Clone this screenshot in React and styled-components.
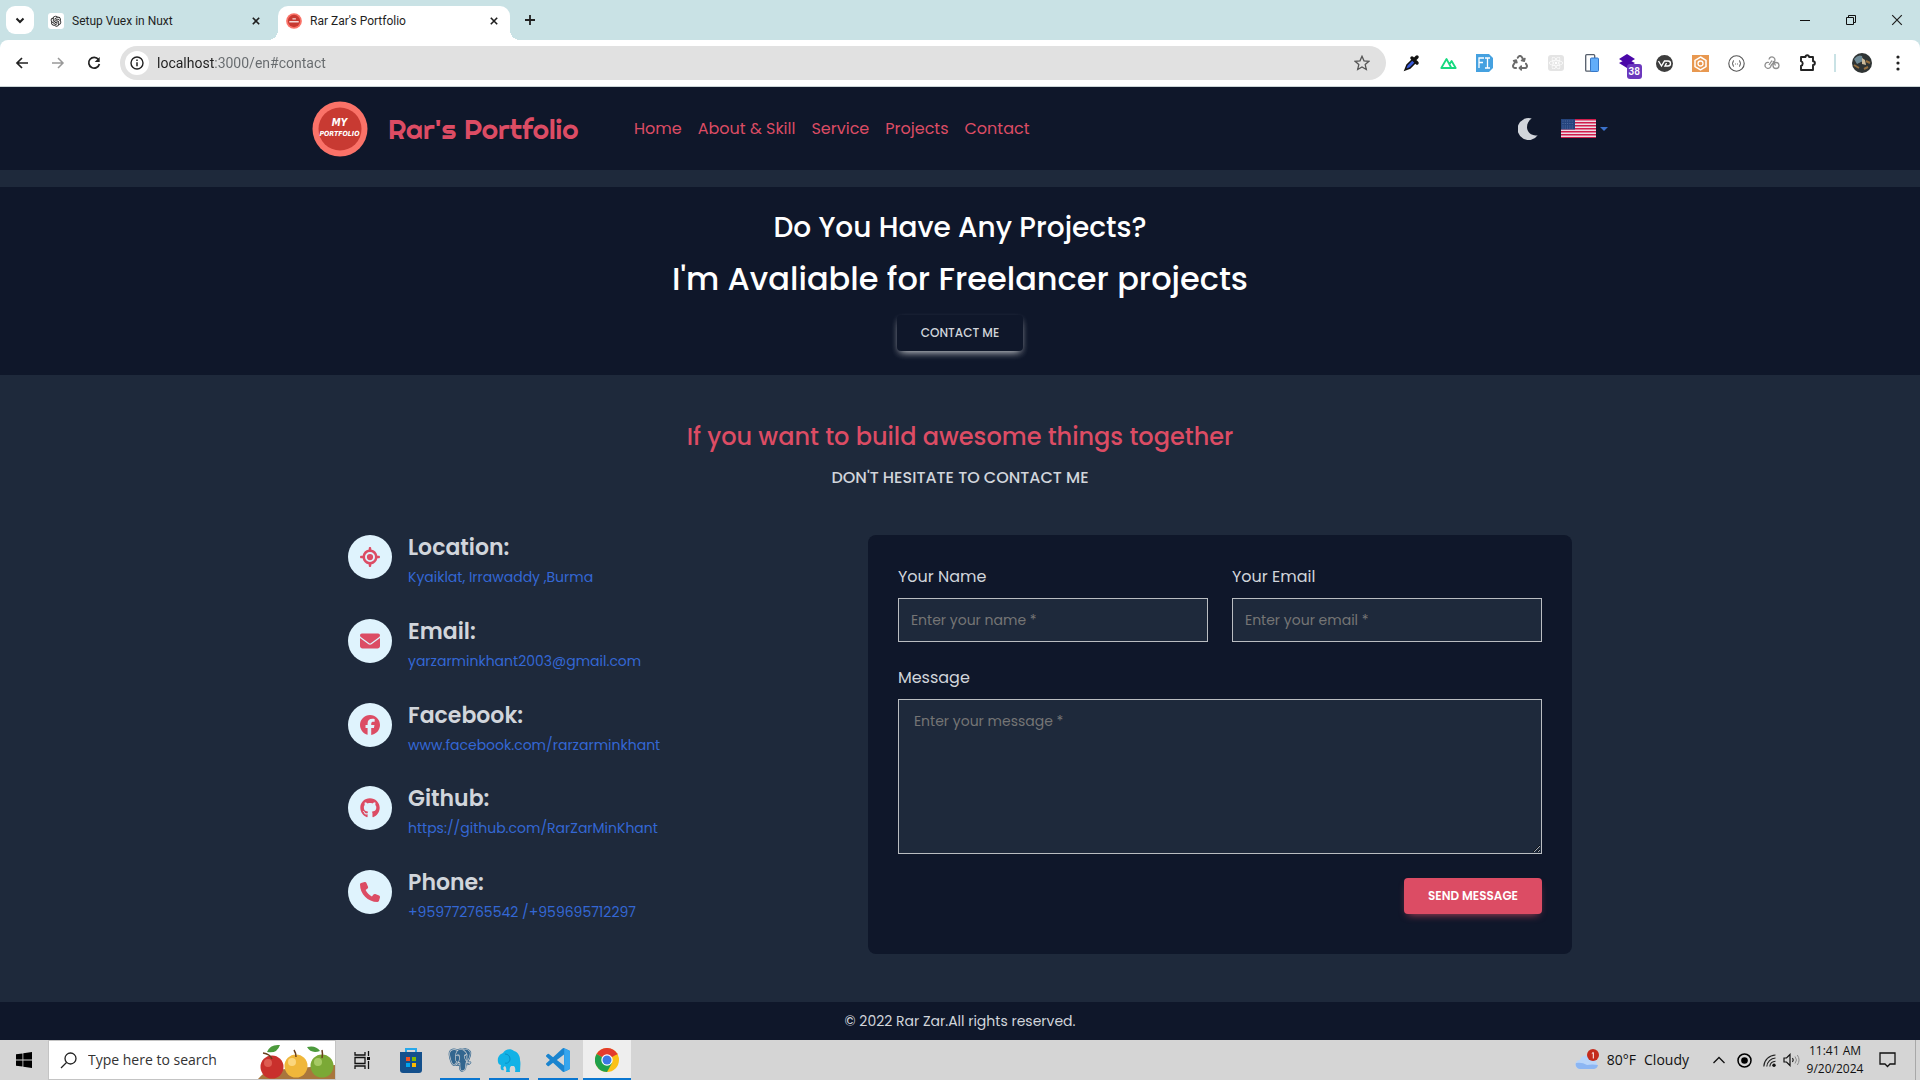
import React from "react";
import styled, { createGlobalStyle, css } from "styled-components";
import {
  FaLocationCrosshairs,
  FaEnvelope,
  FaFacebook,
  FaGithub,
  FaPhone,
  FaRecycle,
  FaReact,
} from "react-icons/fa6";
import { AiOutlineOpenAI } from "react-icons/ai";
import { BiLogoPostgresql } from "react-icons/bi";

const c = {
  navy: "#0f172a",
  slate: "#1e293b",
  pink: "#dc4c64",
  text: "#d1d5db",
  link: "#3467d4",
  strip: "#c9e2e5",
  task: "#d5d5d5",
};

const body = `Poppins, Inter, "Open Sans", sans-serif`;
const display = `Righteous, Poppins, Inter, sans-serif`;
const system = `"Segoe UI", "Open Sans", "Noto Sans", sans-serif`;
const browser = `Roboto, "Open Sans", sans-serif`;

const Global = createGlobalStyle`
  *, *::before, *::after { box-sizing: border-box; }
  body { margin: 0; background: ${c.slate}; font-family: ${body}; color: ${c.text}; }
  h1, h2, h3, p { margin: 0; }
  button, input, textarea { font: inherit; }
  button { border: 0; background: none; padding: 0; color: inherit; cursor: pointer; }
  a { text-decoration: none; }
  svg { display: block; flex: none; }
`;

const Screen = styled.div`
  display: flex;
  flex-direction: column;
  min-height: 100vh;
`;

/* ---------- browser window ---------- */

const BrowserChrome = styled.header`
  background: ${c.strip};
  font-family: ${browser};
  color: #1f1f1f;
`;

const TabStrip = styled.div`
  display: flex;
  align-items: flex-end;
  height: 40px;
  padding-left: 6px;
`;

const TabSearch = styled.button`
  display: grid;
  place-items: center;
  width: 28px;
  height: 28px;
  margin: 0 6px 6px 0;
  border-radius: 9px;
  background: #fff;
`;

const Tab = styled.div`
  display: flex;
  align-items: center;
  gap: 8px;
  width: ${(p) => (p.$active ? 232 : 238)}px;
  height: 34px;
  padding: 0 ${(p) => (p.$active ? 8 : 14)}px 5px 8px;
  font-size: 12px;
  line-height: 16px;
  ${(p) =>
    p.$active &&
    css`
      position: relative;
      background: #fff;
      border-radius: 10px 10px 0 0;
      &::before,
      &::after {
        content: "";
        position: absolute;
        bottom: 0;
        width: 10px;
        height: 10px;
      }
      &::before {
        left: -10px;
        background: radial-gradient(circle at 0 0, transparent 10px, #fff 10px);
      }
      &::after {
        right: -10px;
        background: radial-gradient(circle at 100% 0, transparent 10px, #fff 10px);
      }
    `}
`;

const TabTitle = styled.span`
  flex: 1;
  white-space: nowrap;
`;

const Favicon = styled.span`
  display: grid;
  place-items: center;
  width: 16px;
  height: 16px;
  border-radius: 3px;
  background: ${(p) => p.$fill || "none"};
`;

const GlyphButton = styled.button`
  display: grid;
  place-items: center;
  width: ${(p) => p.$w || 16}px;
  height: ${(p) => p.$h || 16}px;
  color: ${(p) => p.$color || "inherit"};
  flex: none;
`;

const WindowControls = styled.div`
  display: flex;
  margin-left: auto;
  align-self: flex-start;
`;

const Toolbar = styled.div`
  display: flex;
  align-items: center;
  height: 47px;
  padding: 0 4px;
  background: #fff;
  border-bottom: 1px solid #cbd5d6;
  border-radius: 8px 8px 0 0;
`;

const AddressBar = styled.div`
  display: flex;
  align-items: center;
  gap: 8px;
  flex: 1;
  height: 34px;
  margin: 0 8px;
  padding: 0 16px 0 5px;
  border-radius: 17px;
  background: #e1e1e1;
`;

const SiteInfo = styled.button`
  display: grid;
  place-items: center;
  width: 24px;
  height: 24px;
  border-radius: 50%;
  background: #fff;
`;

const AddressInput = styled.input`
  flex: 1;
  min-width: 0;
  padding: 0;
  border: 0;
  outline: 0;
  font-size: 14px;
  line-height: 20px;
  color: #5f6368;
  background: linear-gradient(90deg, #1f1f1f 57px, #666a6d 57px);
  -webkit-background-clip: text;
  background-clip: text;
  -webkit-text-fill-color: transparent;
`;

const Extensions = styled.div`
  display: flex;
  align-items: center;
`;

const ExtensionBadge = styled.span`
  position: absolute;
  right: 4px;
  bottom: 0;
  padding: 0 2px;
  border-radius: 3px;
  background: #6b38bd;
  color: #fff;
  font-size: 10px;
  font-weight: 600;
  line-height: 15px;
`;

const ExtensionButton = styled.button`
  position: relative;
  display: grid;
  place-items: center;
  width: 36px;
  height: 32px;
`;

const Divider = styled.span`
  width: 2px;
  height: 18px;
  margin: 0 8px;
  background: ${c.strip};
`;

/* ---------- portfolio page ---------- */

const Page = styled.div`
  display: flex;
  flex-direction: column;
  flex: 1;
`;

const NavBar = styled.nav`
  background: ${c.navy};
  margin-bottom: 17px;
`;

const NavInner = styled.div`
  display: flex;
  align-items: center;
  max-width: 1320px;
  height: 83px;
  margin: 0 auto;
  padding: 0 12px;
`;

const Brand = styled.a`
  display: flex;
  align-items: center;
  gap: 20px;
  width: 322px;
  color: ${c.pink};
  font-family: ${display};
  font-size: 28px;
  font-weight: 400;
  line-height: 32px;
  white-space: nowrap;
`;

const NavLinks = styled.div`
  display: flex;
  gap: 16px;
  flex: 1;
`;

const NavLink = styled.a`
  color: ${c.pink};
  font-size: 16px;
  line-height: 24px;
`;

const NavTools = styled.div`
  display: flex;
  align-items: center;
  gap: 23px;
`;

const LanguageButton = styled.button`
  display: flex;
  align-items: center;
  gap: 4px;
`;

const Hero = styled.section`
  display: flex;
  flex-direction: column;
  align-items: center;
  padding: 21px 12px 24px;
  background: ${c.navy};
  color: #fff;
  text-align: center;
`;

const HeroLead = styled.h2`
  font-size: 28px;
  font-weight: 500;
  line-height: 40px;
  margin-bottom: 11px;
`;

const HeroTitle = styled.h1`
  font-size: 32px;
  font-weight: 500;
  line-height: 40px;
  margin-bottom: 16px;
`;

const Button = styled.button`
  height: 36px;
  padding: 0 24px;
  border-radius: 4px;
  font-size: 12px;
  line-height: 18px;
  font-weight: ${(p) => (p.$primary ? 600 : 500)};
  text-transform: uppercase;
  color: ${(p) => (p.$primary ? "#fff" : c.text)};
  background: ${(p) => (p.$primary ? c.pink : c.navy)};
  box-shadow: ${(p) =>
    p.$primary
      ? "0 4px 9px -4px rgba(220, 76, 100, 0.9)"
      : "0 4px 9px -4px rgba(255, 255, 255, 0.9), 0 3px 6px rgba(255, 255, 255, 0.16)"};
`;

const ContactSection = styled.section`
  flex: 1;
  width: 100%;
  max-width: 1320px;
  margin: 0 auto;
  padding: 44px 48px 48px;
`;

const SectionTitle = styled.h2`
  color: ${c.pink};
  font-size: 24px;
  font-weight: 500;
  line-height: 36px;
  text-align: center;
`;

const SectionNote = styled.p`
  margin: 10px 0 45px;
  font-size: 16px;
  font-weight: 500;
  line-height: 25px;
  text-align: center;
  text-transform: uppercase;
`;

const ContactGrid = styled.div`
  display: grid;
  grid-template-columns: 5fr 7fr;
  column-gap: 17px;
`;

const ContactList = styled.div`
  display: flex;
  flex-direction: column;
  justify-content: space-between;
  padding-bottom: 24px;
`;

const ContactItem = styled.div`
  display: flex;
  gap: 16px;
  height: 60px;
`;

const ContactIcon = styled.span`
  display: grid;
  place-items: center;
  width: 44px;
  height: 44px;
  border-radius: 50%;
  background: #dff3fd;
  color: ${c.pink};
  flex: none;
`;

const ContactLabel = styled.h3`
  font-size: 22px;
  font-weight: 600;
  line-height: 26px;
  margin-bottom: 6px;
`;

const ContactLink = styled.a`
  display: block;
  color: ${c.link};
  font-size: 14px;
  line-height: 21px;
`;

const FormCard = styled.form`
  display: grid;
  grid-template-columns: 1fr 1fr;
  gap: 24px;
  padding: 30px 30px 40px;
  border-radius: 8px;
  background: ${c.navy};
`;

const Field = styled.div`
  display: flex;
  flex-direction: column;
  gap: 9px;
  grid-column: ${(p) => (p.$wide ? "1 / -1" : "auto")};
`;

const FieldLabel = styled.label`
  font-size: 16px;
  line-height: 24px;
`;

const control = css`
  width: 100%;
  border: 1px solid #babdc1;
  border-radius: 0;
  outline: 0;
  background: ${c.slate};
  color: ${c.text};
  font-size: 14px;
  line-height: 21px;
  &::placeholder {
    color: #757575;
    opacity: 1;
  }
`;

const TextInput = styled.input`
  ${control}
  height: 44px;
  padding: 0 12px;
`;

const TextArea = styled.textarea`
  ${control}
  display: block;
  height: 155px;
  padding: 11px 15px;
  resize: both;
`;

const FormActions = styled.div`
  grid-column: 1 / -1;
  display: flex;
  justify-content: flex-end;
`;

const Footer = styled.footer`
  padding: 7px 12px;
  background: ${c.navy};
  font-size: 14px;
  line-height: 24px;
  text-align: center;
`;

/* ---------- taskbar ---------- */

const Taskbar = styled.div`
  display: flex;
  align-items: stretch;
  height: 40px;
  background: ${c.task};
  color: #111;
  font-family: ${system};
`;

const StartButton = styled.button`
  display: grid;
  place-items: center;
  width: 48px;
`;

const SearchBox = styled.label`
  display: flex;
  align-items: center;
  width: 288px;
  margin-right: 2px;
  padding-left: 11px;
  border: 1px solid #c4c4c4;
  background: #fff;
`;

const SearchInput = styled.input`
  flex: 1;
  min-width: 0;
  margin-left: 11px;
  padding: 0;
  border: 0;
  outline: 0;
  background: none;
  font-size: 14px;
  line-height: 20px;
  &::placeholder {
    color: #333;
    opacity: 1;
  }
`;

const TaskButton = styled.button`
  display: grid;
  place-items: center;
  width: 48px;
  margin-right: 1px;
  background: ${(p) => (p.$active ? "#eeeeee" : "none")};
  box-shadow: ${(p) => (p.$active ? "inset 0 -2px #0a76d0" : "none")};
  ${(p) =>
    p.$running &&
    css`
      background: linear-gradient(#0a76d0, #0a76d0) center bottom / 40px 2px no-repeat;
    `}
`;

const Tray = styled.div`
  display: flex;
  align-items: center;
  margin-left: auto;
  padding-right: 4px;
`;

const Weather = styled.button`
  display: flex;
  align-items: center;
  gap: 8px;
  margin-right: 18px;
  font-size: 14px;
  line-height: 20px;
`;

const Clock = styled.time`
  width: 64px;
  margin-left: 2px;
  font-size: 12px;
  line-height: 18px;
  text-align: center;
  white-space: nowrap;
`;

const ShowDesktop = styled.button`
  align-self: stretch;
  width: 1px;
  margin-left: 8px;
  background: #a8a8a8;
`;

/* ---------- drawings ---------- */

const Svg = ({ w = 16, h = w, box = `0 0 ${w} ${h}`, children, ...rest }) => (
  <svg width={w} height={h} viewBox={box} fill="none" aria-hidden="true" {...rest}>
    {children}
  </svg>
);

const Cross = ({ size = 8, stroke = 2 }) => (
  <Svg w={size} box="0 0 10 10">
    <path d="M1 1l8 8M9 1L1 9" stroke="currentColor" strokeWidth={stroke} />
  </Svg>
);

const LogoText = styled.text`
  font-family: "DejaVu Sans Condensed", "DejaVu Sans", sans-serif;
  font-weight: 700;
  font-style: oblique;
  fill: #fff;
  text-anchor: middle;
`;

const Logo = ({ size }) => (
  <Svg w={size} box="-0.5 -0.5 56 56">
    <circle cx="27.500" cy="27.500" r="27.500" fill="#fa7268" />
    <circle cx="27.500" cy="27.500" r="21.500" fill="#c83a32" />
    {size > 20 ? (
      <>
        <LogoText x="27" y="24" fontSize="10">MY</LogoText>
        <LogoText x="27" y="34" fontSize="7">PORTFOLIO</LogoText>
      </>
    ) : (
      <path d="M22 20h12M11 30h33" stroke="#fff" strokeWidth="5" opacity=".8" />
    )}
  </Svg>
);

const Moon = () => (
  <Svg w={20} h={22}>
    <path d="M13.700.5A11 11 0 1 0 19.700 17.200C15 18.500 9 15 9 9.300C9 5.500 10.800 2.300 13.700.5z" fill={c.text} />
  </Svg>
);

const Flag = () => (
  <Svg w={35} h={19}>
    <rect width="35" height="19" fill="#ecdbe3" />
    {[0, 3, 6, 9, 12, 15, 18].map((y) => (
      <rect key={y} y={y} width="35" height="1.500" fill="#d01c4b" />
    ))}
    <rect width="14" height="10.500" fill="#25447d" />
    {[2, 4.5, 7, 9].map((y) => (
      <path key={y} d={`M1.500 ${y}h11.500`} stroke="#5f7bad" strokeWidth=".8" strokeDasharray="1 1.300" />
    ))}
  </Svg>
);

const Puzzle = () => (
  <Svg w={20}>
    <path
      d="M3 4h4.500a1.800 1.800 0 0 1 3.600 0H15v4.200a1.900 1.900 0 0 1 0 3.800v5H3v-4.200a2.400 2.400 0 0 0 0-4.600z"
      stroke="#222" strokeWidth="1.900" strokeLinejoin="round"
    />
  </Svg>
);

const extensions = [
  ["Color picker", (
    <Svg w={18}>
      <path d="M2 16l2-5 6-6 3 3-6 6-5 2z" fill="#3658d8" stroke="#111" strokeWidth="1.500" />
      <path d="M9 4l5 5M11 6l3-3" stroke="#111" strokeWidth="3.500" strokeLinecap="round" />
    </Svg>
  )],
  ["Nuxt", (
    <Svg w={17} h={14}>
      <path d="M6 12H1.300L6.500 3l4.900 9H6zM11.500 12h4.200L11.600 5 9.500 8.300" stroke="#17d97f" strokeWidth="1.800" strokeLinejoin="round" />
    </Svg>
  )],
  ["Fonts", (
    <Svg w={17} h={18}>
      <path d="M0 0h13l4 4v10l-4 4H0z" fill="#45a1e0" />
      <path d="M3 14V4h5M3 8.500h4M9 4h5M9 14h5M11.500 4v10" stroke="#fff" strokeWidth="1.300" />
    </Svg>
  )],
  ["Recycle", <FaRecycle size={16} color="#6b6b6b" />],
  ["React", <Favicon $fill="#e4e4e4"><FaReact size={14} color="#fff" /></Favicon>],
  ["Responsive", (
    <Svg w={14} h={18}>
      <rect x=".7" y=".7" width="9" height="16.500" rx="1" fill="#fff" stroke="#555e6b" strokeWidth="1.300" />
      <rect x="5.500" y="4" width="8" height="13.500" rx="1" fill="#62adf9" stroke="#3577c9" />
    </Svg>
  )],
  ["Layers", (
    <>
      <Svg w={18}>
        <path d="M8 0l8 5-8 5-8-5zM0 9l8-4 8 4-8 5z" fill="#4a07a8" />
      </Svg>
      <ExtensionBadge>38</ExtensionBadge>
    </>
  )],
  ["Video", (
    <Svg w={17}>
      <circle cx="8.500" cy="8.500" r="8.500" fill="#3d3d3d" />
      <path d="M2.500 6l3 5 3-5H12a2.500 2.500 0 0 1 0 5H9l1.500-3" stroke="#fff" strokeWidth="1.400" />
    </Svg>
  )],
  ["Inspector", (
    <Svg w={17}>
      <rect width="17" height="17" fill="#e89850" />
      <path d="M8.500 2l5.500 3.300v6.400L8.500 15 3 11.700V5.300z" stroke="#fff" strokeWidth="1.500" />
      <circle cx="8.500" cy="8.500" r="2.500" stroke="#fff" strokeWidth="1.300" />
    </Svg>
  )],
  ["JSON", (
    <Svg w={17}>
      <circle cx="8.500" cy="8.500" r="7.700" stroke="#555" strokeWidth="1.100" />
      <path d="M6 5.500q-1 0-1 1.500t-1 1.500q1 0 1 1.500t1 1.500M11 5.500q1 0 1 1.500t1 1.500q-1 0-1 1.500t-1 1.500M7 9h.8M9.200 9h.8" stroke="#555" />
    </Svg>
  )],
  ["Links", (
    <Svg w={16} h={14}>
      <path d="M5 3.500a3 3 0 1 1 4.500 3L7 9.500a3 3 0 1 1-2-3M9 5l2.500 4.500M8 4.500L5 9" stroke="#8f8f8f" strokeWidth="1.300" />
      <circle cx="12" cy="9.500" r="3" stroke="#8f8f8f" strokeWidth="1.300" />
    </Svg>
  )],
  ["Extensions", <Puzzle />],
];

const Apples = () => (
  <Svg w={77} h={38}>
    <path d="M0 38q6-8 16-9l61-5v14z" fill="#a8763d" />
    <circle cx="14" cy="26" r="11.500" fill="#c9302c" />
    <circle cx="10" cy="22" r="4" fill="#ec7a6a" opacity=".6" />
    <circle cx="38" cy="25" r="11.500" fill="#f0b73a" />
    <circle cx="34" cy="21" r="4" fill="#ffe39a" opacity=".7" />
    <circle cx="64" cy="25" r="11.500" fill="#7ba936" />
    <circle cx="60" cy="21" r="4" fill="#b9d878" opacity=".7" />
    <path d="M14 18Q12 13 5 12M38 16q0-4-2-7M64 17q1-4 0-8" stroke="#6b3f1d" strokeWidth="1.500" />
    <path d="M9 11Q12 3 22 4 19 13 9 11zM62 10q-4-6-13-4 4 7 13 4z" fill="#4c9a3c" />
  </Svg>
);

const Chrome = () => (
  <Svg w={24}>
    <circle cx="12" cy="12" r="12" fill="#fbc116" />
    <path d="M12 12L1.600 6A12 12 0 0 1 22.400 6z" fill="#e33b2e" />
    <path d="M12 12L1.600 6A12 12 0 0 0 12 24l5-9z" fill="#1fa04b" />
    <path d="M12 6h10.400" stroke="#e33b2e" />
    <circle cx="12" cy="12" r="5.700" fill="#fff" />
    <circle cx="12" cy="12" r="4.500" fill="#3c78e6" />
  </Svg>
);

const Vscode = () => (
  <Svg w={24}>
    <path
      fill="#1a84cf"
      d="M23.150 2.587L18.210.21a1.494 1.494 0 0 0-1.705.29l-9.460 8.630-4.120-3.128a.999.999 0 0 0-1.276.057L.327 7.261A1 1 0 0 0 .326 8.740L3.899 12 .326 15.260a1 1 0 0 0 .001 1.479L1.650 17.940a.999.999 0 0 0 1.276.057l4.120-3.128 9.460 8.630a1.492 1.492 0 0 0 1.704.29l4.942-2.377A1.500 1.500 0 0 0 24 20.060V3.939a1.500 1.500 0 0 0-.85-1.352zm-5.146 14.861L10.826 12l7.178-5.448v10.896z"
    />
    <path d="M18.200.2l4.950 2.387A1.500 1.500 0 0 1 24 3.940v16.120a1.500 1.500 0 0 1-.85 1.352L18.200 23.800z" fill="#35a5ee" />
  </Svg>
);

const Elephant = () => (
  <Svg w={24}>
    <path
      d="M1 14C0 9 3 6 6 5c2-4 8-5 11-2 4 1 6 5 6 9 1 4 0 8 0 12h-5q1-4-1-6h-3q-2 2-1 6H9q1-4-1-6c-2 1-2 2-1 4-3 1-4-2-3-5-1 0-3-1-3-3z"
      fill="#12b2e6"
    />
    <path d="M8 6c3 0 5 2 5 5s-3 5-5 4" stroke="#0a8fc4" />
  </Svg>
);

const Store = () => (
  <Svg w={24} h={28}>
    <path d="M7 7V3h10v4" stroke="#28a8ea" strokeWidth="2" />
    <path d="M1 6h22v18a3 3 0 0 1-3 3H4a3 3 0 0 1-3-3z" fill="#14508c" />
    <path d="M7 11h4v4H7z" fill="#f25022" /><path d="M13 11h4v4h-4z" fill="#7fba00" />
    <path d="M7 17h4v4H7z" fill="#00a4ef" /><path d="M13 17h4v4h-4z" fill="#ffb900" />
  </Svg>
);

const TaskView = () => (
  <Svg w={17} h={18}>
    <path d="M1 1v3h10V1M1 6.500h10v6H1zM1 18v-3h10v3M14.500 0v5M14.500 10v8" stroke="#111" strokeWidth="1.300" />
    <path d="M13 6h3v3h-3z" fill="#111" />
  </Svg>
);

const CloudWeather = () => (
  <Svg w={24} h={22}>
    <path d="M5 20a4.500 4.500 0 0 1 0-9 7 7 0 0 1 12.500-1A5.300 5.300 0 0 1 19 20z" fill="#b9d5f9" />
    <path d="M5 20a4.500 4.500 0 0 1-4-6Q7 13 12 16q5-1 11 0a5 5 0 0 1-4 4z" fill="#8cb6f3" />
    <circle cx="18" cy="6" r="6" fill="#c42b1c" />
    <path d="M16.800 4.500l1.500-1v6" stroke="#fff" />
  </Svg>
);

const contacts = [
  ["Location:", "Kyaiklat, Irrawaddy ,Burma", FaLocationCrosshairs, "#location"],
  ["Email:", "yarzarminkhant2003@gmail.com", FaEnvelope, "mailto:yarzarminkhant2003@gmail.com"],
  ["Facebook:", "www.facebook.com/rarzarminkhant", FaFacebook, "#facebook"],
  ["Github:", "https://github.com/RarZarMinKhant", FaGithub, "#github"],
  ["Phone:", "+959772765542 /+959695712297", FaPhone, "tel:+959772765542"],
];

const navItems = ["Home", "About & Skill", "Service", "Projects", "Contact"];

/* ---------- sections ---------- */

function BrowserHeader() {
  return (
    <BrowserChrome>
      <TabStrip>
        <TabSearch aria-label="Search tabs">
          <Svg w={10}><path d="M1.500 3.500L5 7l3.500-3.500" stroke="#1f1f1f" strokeWidth="2" /></Svg>
        </TabSearch>
        <Tab>
          <Favicon $fill="#fff"><AiOutlineOpenAI size={14} /></Favicon>
          <TabTitle>Setup Vuex in Nuxt</TabTitle>
          <GlyphButton aria-label="Close tab"><Cross /></GlyphButton>
        </Tab>
        <Tab $active>
          <Favicon><Logo size={16} /></Favicon>
          <TabTitle>Rar Zar's Portfolio</TabTitle>
          <GlyphButton aria-label="Close tab"><Cross /></GlyphButton>
        </Tab>
        <GlyphButton $w={40} $h={40} aria-label="New tab">
          <Svg w={12}><path d="M6 1v10M1 6h10" stroke="#222" strokeWidth="1.800" /></Svg>
        </GlyphButton>
        <WindowControls>
          <GlyphButton $w={46} $h={40} aria-label="Minimize">
            <Svg w={10}><path d="M0 5.500h10" stroke="#111" /></Svg>
          </GlyphButton>
          <GlyphButton $w={46} $h={40} aria-label="Restore">
            <Svg w={10}><path d="M.5 2.500h7v7h-7zM2.500 2.500v-2h7v7h-2" stroke="#111" /></Svg>
          </GlyphButton>
          <GlyphButton $w={46} $h={40} aria-label="Close"><Cross size={12} stroke={1} /></GlyphButton>
        </WindowControls>
      </TabStrip>
      <Toolbar>
        <GlyphButton $w={36} $h={32} aria-label="Back">
          <Svg w={14}><path d="M13 7H2M7 2L2 7l5 5" stroke="#222" strokeWidth="1.700" /></Svg>
        </GlyphButton>
        <GlyphButton $w={36} $h={32} aria-label="Forward">
          <Svg w={14}><path d="M1 7h11M7 2l5 5-5 5" stroke="#999" strokeWidth="1.500" /></Svg>
        </GlyphButton>
        <GlyphButton $w={36} $h={32} aria-label="Reload">
          <Svg w={14}>
            <path d="M11.500 3.500A5.400 5.400 0 1 0 12.400 8" stroke="#222" strokeWidth="1.700" />
            <path d="M12.700 1v5H7.700z" fill="#222" />
          </Svg>
        </GlyphButton>
        <AddressBar>
          <SiteInfo aria-label="Site information">
            <Svg w={14}>
              <circle cx="7" cy="7" r="6" stroke="#222" strokeWidth="1.400" />
              <path d="M7 6.200v4M7 3.500v1.500" stroke="#222" strokeWidth="1.500" />
            </Svg>
          </SiteInfo>
          <AddressInput aria-label="Address" defaultValue="localhost:3000/en#contact" />
          <GlyphButton aria-label="Bookmark">
            <Svg w={16}>
              <path d="M8 1.300l2 4.500 4.900.5-3.700 3.300 1.100 4.900L8 12l-4.300 2.500 1.100-4.900L1.100 6.300 6 5.800z" stroke="#555" strokeWidth="1.300" />
            </Svg>
          </GlyphButton>
        </AddressBar>
        <Extensions>
          {extensions.map(([name, icon]) => (
            <ExtensionButton key={name} aria-label={name}>{icon}</ExtensionButton>
          ))}
          <Divider />
          <ExtensionButton aria-label="Profile">
            <Svg w={20}>
              <circle cx="10" cy="10" r="10" fill="#2f3434" />
              <path d="M2 6q4-5 8-3l1 5-6 3z" fill="#6e8a96" />
              <path d="M10 5l3 2 1 5-4-1z" fill="#cdbb9b" />
              <path d="M2 12l5 3M14 8l4 2M12 16l4-2" stroke="#96703f" strokeWidth="2" />
            </Svg>
          </ExtensionButton>
          <ExtensionButton aria-label="Menu">
            <Svg w={4} h={16}>
              <circle cx="2" cy="2" r="1.600" fill="#222" />
              <circle cx="2" cy="8" r="1.600" fill="#222" />
              <circle cx="2" cy="14" r="1.600" fill="#222" />
            </Svg>
          </ExtensionButton>
        </Extensions>
      </Toolbar>
    </BrowserChrome>
  );
}

function SiteNav() {
  return (
    <NavBar>
      <NavInner>
        <Brand href="#home"><Logo size={56} />Rar's Portfolio</Brand>
        <NavLinks>
          {navItems.map((item) => (
            <NavLink key={item} href={`#${item.split(" ")[0].toLowerCase()}`}>{item}</NavLink>
          ))}
        </NavLinks>
        <NavTools>
          <GlyphButton $w={20} $h={22} aria-label="Toggle theme"><Moon /></GlyphButton>
          <LanguageButton aria-label="Language">
            <Flag />
            <Svg w={8} h={4}><path d="M0 0h8L4 4z" fill="#3b71ca" /></Svg>
          </LanguageButton>
        </NavTools>
      </NavInner>
    </NavBar>
  );
}

function Contact() {
  return (
    <ContactSection id="contact">
      <SectionTitle>If you want to build awesome things together</SectionTitle>
      <SectionNote>Don't hesitate to contact me</SectionNote>
      <ContactGrid>
        <ContactList>
          {contacts.map(([label, value, Icon, href]) => (
            <ContactItem key={label}>
              <ContactIcon><Icon size={20} /></ContactIcon>
              <div>
                <ContactLabel>{label}</ContactLabel>
                <ContactLink href={href}>{value}</ContactLink>
              </div>
            </ContactItem>
          ))}
        </ContactList>
        <FormCard onSubmit={(e) => e.preventDefault()}>
          <Field>
            <FieldLabel htmlFor="name">Your Name</FieldLabel>
            <TextInput id="name" placeholder="Enter your name *" />
          </Field>
          <Field>
            <FieldLabel htmlFor="email">Your Email</FieldLabel>
            <TextInput id="email" type="email" placeholder="Enter your email *" />
          </Field>
          <Field $wide>
            <FieldLabel htmlFor="message">Message</FieldLabel>
            <TextArea id="message" placeholder="Enter your message *" />
          </Field>
          <FormActions>
            <Button $primary type="submit">Send Message</Button>
          </FormActions>
        </FormCard>
      </ContactGrid>
    </ContactSection>
  );
}

function WindowsTaskbar() {
  return (
    <Taskbar>
      <StartButton aria-label="Start">
        <Svg w={16}>
          <path d="M0 2.300l6.500-.9v6.100H0zM7.300 1.300L16 0v7.500H7.300zM0 8.400h6.500v6.200L0 13.700zM7.300 8.400H16V16l-8.700-1.300z" fill="#000" />
        </Svg>
      </StartButton>
      <SearchBox>
        <Svg w={17}>
          <circle cx="10.500" cy="6.500" r="5.500" stroke="#222" strokeWidth="1.300" />
          <path d="M6.500 10.500L1 16" stroke="#222" strokeWidth="1.300" />
        </Svg>
        <SearchInput aria-label="Search" placeholder="Type here to search" />
        <Apples />
      </SearchBox>
      <TaskButton aria-label="Task view"><TaskView /></TaskButton>
      <TaskButton aria-label="Store"><Store /></TaskButton>
      <TaskButton $running aria-label="PostgreSQL"><BiLogoPostgresql size={28} color="#33668f" /></TaskButton>
      <TaskButton $running aria-label="Database client"><Elephant /></TaskButton>
      <TaskButton $running aria-label="Editor"><Vscode /></TaskButton>
      <TaskButton $active aria-label="Browser"><Chrome /></TaskButton>
      <Tray>
        <Weather>
          <CloudWeather />
          <span>80°F</span>
          <span>Cloudy</span>
        </Weather>
        <GlyphButton $w={24} $h={24} aria-label="Hidden icons">
          <Svg w={12} h={8}><path d="M.5 7L6 1.500 11.500 7" stroke="#111" strokeWidth="1.300" /></Svg>
        </GlyphButton>
        <GlyphButton $w={26} $h={24} aria-label="Recording">
          <Svg w={15}>
            <circle cx="7.500" cy="7.500" r="6.500" stroke="#000" strokeWidth="1.500" />
            <circle cx="7.500" cy="7.500" r="3.300" fill="#000" />
          </Svg>
        </GlyphButton>
        <GlyphButton $w={24} $h={24} aria-label="Network">
          <Svg w={13}>
            <path d="M.8 12.500A12 12 0 0 1 12.500 1M3.800 12.500A9 9 0 0 1 12.500 4M6.800 12.500a6 6 0 0 1 5.700-5.300" stroke="#222" strokeWidth="1.100" />
            <circle cx="11" cy="11.300" r="1.700" fill="#111" />
          </Svg>
        </GlyphButton>
        <GlyphButton $w={20} $h={24} aria-label="Volume">
          <Svg w={17} h={14}>
            <path d="M1 5h2.500L7 1.500v11L3.500 9H1z" stroke="#111" strokeWidth="1.200" />
            <path d="M9.500 5q1.500 2 0 4" stroke="#111" strokeWidth="1.200" />
            <path d="M12 3.500q3 3.500 0 7M14.300 2q3.500 5 0 10" stroke="#8c8c8c" />
          </Svg>
        </GlyphButton>
        <Clock>11:41 AM<br />9/20/2024</Clock>
        <GlyphButton $w={40} $h={24} aria-label="Notifications">
          <Svg w={17} h={16}>
            <path d="M1 1h15v11h-5l-2.500 2.500L6 12H1z" stroke="#111" strokeWidth="1.300" />
          </Svg>
        </GlyphButton>
        <ShowDesktop aria-label="Show desktop" />
      </Tray>
    </Taskbar>
  );
}

export default function App() {
  return (
    <Screen>
      <Global />
      <BrowserHeader />
      <Page>
        <SiteNav />
        <Hero>
          <HeroLead>Do You Have Any Projects?</HeroLead>
          <HeroTitle>I'm Avaliable for Freelancer projects</HeroTitle>
          <Button>Contact Me</Button>
        </Hero>
        <Contact />
        <Footer>© 2022 Rar Zar.All rights reserved.</Footer>
      </Page>
      <WindowsTaskbar />
    </Screen>
  );
}
